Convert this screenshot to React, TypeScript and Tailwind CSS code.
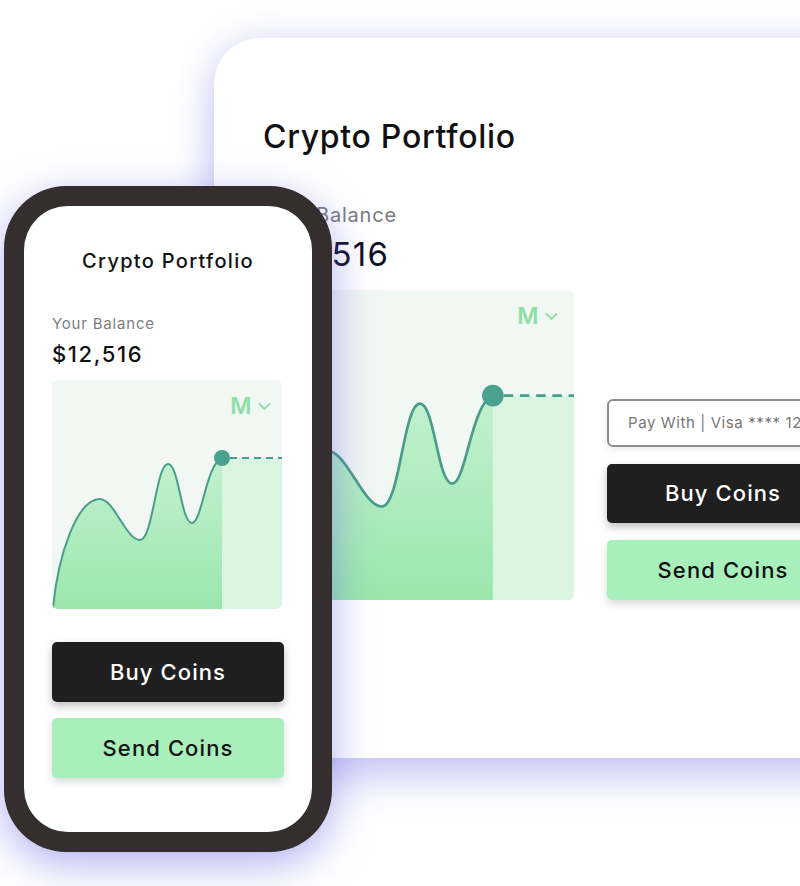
import React from "react";

const CURVE =
  "M1,228 C6,175 25,119 48,119 C62,119 74,160 88,160 C101,160 104,84 116,84 C127,84 129,143 140,143 C150,143 154,84 170,78";

function Chart({ w, h, id }: { w: number; h: number; id: string }) {
  return (
    <svg width={w} height={h} viewBox="0 0 230 229" preserveAspectRatio="none" className="block">
      <defs>
        <linearGradient id={id} x1="0" y1="0" x2="0" y2="1">
          <stop offset="0%" stopColor="#c2f1cf" />
          <stop offset="100%" stopColor="#9be6ad" />
        </linearGradient>
      </defs>
      <rect x="0" y="0" width="230" height="229" fill="#f1f7f3" />
      <rect x="170" y="78" width="60" height="151" fill="#d9f5df" />
      <path d={CURVE + " L170,229 L1,229 Z"} fill={`url(#${id})`} />
      <path d={CURVE} fill="none" stroke="#4a9d8b" strokeWidth="2" strokeLinecap="round" />
      <line x1="178" y1="78" x2="230" y2="78" stroke="#4a9d8b" strokeWidth="2" strokeDasharray="7 5" />
      <circle cx="170" cy="78" r="8" fill="#48a28e" />
    </svg>
  );
}

function ChartBox({ w, h, id, pos }: { w: number; h: number; id: string; pos: string }) {
  return (
    <div className="relative overflow-hidden rounded-[6px]" style={{ width: w, height: h }}>
      <Chart w={w} h={h} id={id} />
      <div className={`absolute flex items-center gap-[6px] ${pos}`}>
        <span className="text-[23px] leading-[22px] font-semibold text-[#8fdfa5] tracking-[0.5px]">M</span>
        <svg width="13" height="9" viewBox="0 0 13 9">
          <polyline points="1,1.5 6.5,7 12,1.5" fill="none" stroke="#8fdfa5" strokeWidth="1.8" />
        </svg>
      </div>
    </div>
  );
}

export default function App() {
  return (
    <div className="relative w-[800px] h-[886px] overflow-hidden bg-white font-['Inter','Liberation_Sans',sans-serif]">
      {/* Desktop card */}
      <div className="absolute left-[214px] top-[38px] w-[700px] h-[720px] rounded-[46px] bg-white shadow-[0_0_36px_rgba(120,120,230,0.22),0_22px_40px_rgba(110,110,225,0.3)] pl-[49px] pt-[79px]">
        <div className="text-[32px] leading-[40px] font-medium text-[#111] tracking-[0.7px]">Crypto Portfolio</div>
        <div className="mt-[44px] text-[20px] leading-[28px] text-[#7a7a82] tracking-[0.8px]">Your Balance</div>
        <div className="mt-[5px] text-[33px] leading-[40px] text-[#10102a] tracking-[1.2px]">$12,516</div>
        <div className="mt-[16px] flex items-end gap-[33px]">
          <ChartBox w={311} h={310} id="g2" pos="top-[15px] right-[16px]" />
          <div className="flex flex-col gap-[17px] w-[232px] shrink-0">
            <div className="h-[48px] rounded-[6px] border-2 border-[#8d8d8d] bg-white flex items-center pl-[19px] text-[15px] text-[#777] tracking-[0.6px] whitespace-nowrap overflow-hidden shadow-[0_3px_6px_rgba(0,0,0,0.08)]">
              Pay With | Visa **** 1234
            </div>
            <div className="h-[59px] rounded-[5px] bg-[#1f1f1f] flex items-center justify-center text-[22px] font-medium text-white tracking-[1.1px] shadow-[0_4px_8px_rgba(0,0,0,0.25)]">
              Buy Coins
            </div>
            <div className="h-[60px] rounded-[5px] bg-[#a9efbc] flex items-center justify-center text-[22px] font-medium text-[#111] tracking-[1.1px] shadow-[0_4px_8px_rgba(0,0,0,0.15)]">
              Send Coins
            </div>
          </div>
        </div>
      </div>

      {/* Phone */}
      <div className="absolute left-[4px] top-[186px] w-[328px] h-[666px] rounded-[62px] bg-[#342e2e] p-[20px] shadow-[0_12px_40px_rgba(100,100,230,0.5)]">
        <div className="h-full rounded-[44px] bg-white px-[28px] pt-[41px] flex flex-col">
          <div className="text-center text-[20px] leading-[28px] font-medium text-[#111] tracking-[1.3px]">Crypto Portfolio</div>
          <div className="mt-[39px] text-[15px] leading-[20px] text-[#7d7d7d] tracking-[0.8px]">Your Balance</div>
          <div className="mt-[6px] text-[22px] leading-[28px] font-medium text-[#111] tracking-[1.6px]">$12,516</div>
          <div className="mt-[12px]">
            <ChartBox w={230} h={229} id="g1" pos="top-[15px] right-[11px]" />
          </div>
          <div className="mt-[33px] w-[232px] h-[60px] rounded-[5px] bg-[#1f1f1f] flex items-center justify-center text-[22px] font-medium text-white tracking-[1.1px] shadow-[0_4px_8px_rgba(0,0,0,0.25)]">
            Buy Coins
          </div>
          <div className="mt-[16px] w-[232px] h-[60px] rounded-[5px] bg-[#a9efbc] flex items-center justify-center text-[22px] font-medium text-[#111] tracking-[1.1px] shadow-[0_4px_8px_rgba(0,0,0,0.15)]">
            Send Coins
          </div>
        </div>
      </div>
    </div>
  );
}
